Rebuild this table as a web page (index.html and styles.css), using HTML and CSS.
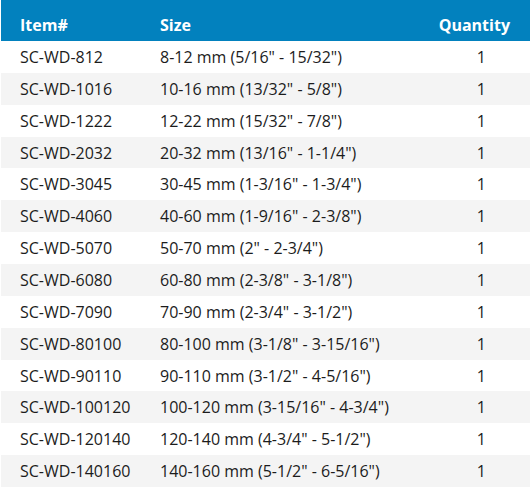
FILE: index.html
```
<!DOCTYPE html>
<html lang="en">
<head>
    <meta charset="UTF-8">
    <meta name="viewport" content="width=device-width, initial-scale=1.0">
    <title>Size Chart</title>
    <link rel="stylesheet" href="styles.css">
</head>
<body>
    <table class="sizes">
        <thead>
            <tr>
                <th class="item">Item#</th>
                <th class="size">Size</th>
                <th class="qty">Quantity</th>
            </tr>
        </thead>
        <tbody>
            <tr><td class="item">SC-WD-812</td><td class="size">8-12 mm (5/16" - 15/32")</td><td class="qty">1</td></tr>
            <tr><td class="item">SC-WD-1016</td><td class="size">10-16 mm (13/32" - 5/8")</td><td class="qty">1</td></tr>
            <tr><td class="item">SC-WD-1222</td><td class="size">12-22 mm (15/32" - 7/8")</td><td class="qty">1</td></tr>
            <tr><td class="item">SC-WD-2032</td><td class="size">20-32 mm (13/16" - 1-1/4")</td><td class="qty">1</td></tr>
            <tr><td class="item">SC-WD-3045</td><td class="size">30-45 mm (1-3/16" - 1-3/4")</td><td class="qty">1</td></tr>
            <tr><td class="item">SC-WD-4060</td><td class="size">40-60 mm (1-9/16" - 2-3/8")</td><td class="qty">1</td></tr>
            <tr><td class="item">SC-WD-5070</td><td class="size">50-70 mm (2" - 2-3/4")</td><td class="qty">1</td></tr>
            <tr><td class="item">SC-WD-6080</td><td class="size">60-80 mm (2-3/8" - 3-1/8")</td><td class="qty">1</td></tr>
            <tr><td class="item">SC-WD-7090</td><td class="size">70-90 mm (2-3/4" - 3-1/2")</td><td class="qty">1</td></tr>
            <tr><td class="item">SC-WD-80100</td><td class="size">80-100 mm (3-1/8" - 3-15/16")</td><td class="qty">1</td></tr>
            <tr><td class="item">SC-WD-90110</td><td class="size">90-110 mm (3-1/2" - 4-5/16")</td><td class="qty">1</td></tr>
            <tr><td class="item">SC-WD-100120</td><td class="size">100-120 mm (3-15/16" - 4-3/4")</td><td class="qty">1</td></tr>
            <tr><td class="item">SC-WD-120140</td><td class="size">120-140 mm (4-3/4" - 5-1/2")</td><td class="qty">1</td></tr>
            <tr><td class="item">SC-WD-140160</td><td class="size">140-160 mm (5-1/2" - 6-5/16")</td><td class="qty">1</td></tr>
        </tbody>
    </table>
</body>
</html>
```
FILE: styles.css
```
body {
    margin: 0;
    background: #fff;
    font-family: 'Open Sans', sans-serif;
}
.sizes {
    width: 529px;
    margin-left: 1px;
    border-collapse: collapse;
    border-spacing: 0;
    font-size: 16px;
    color: #1c1c1c;
}
.sizes th,
.sizes td {
    padding: 0;
    white-space: nowrap;
}
.sizes thead tr {
    height: 41px;
    background: #0281be;
}
.sizes th {
    color: #fff;
    font-weight: 700;
    text-align: left;
    vertical-align: middle;
    padding-top: 8px;
}
.sizes tbody tr {
    height: 31.86px;
}
.sizes tbody tr:nth-child(even) {
    background: #f4f4f4;
}
.item {
    width: 140px;
    padding-left: 19px !important;
}
.sizes th.qty {
    text-align: right;
    padding-right: 20px;
}
.sizes td.qty {
    text-align: right;
    padding-right: 44px;
}
```
